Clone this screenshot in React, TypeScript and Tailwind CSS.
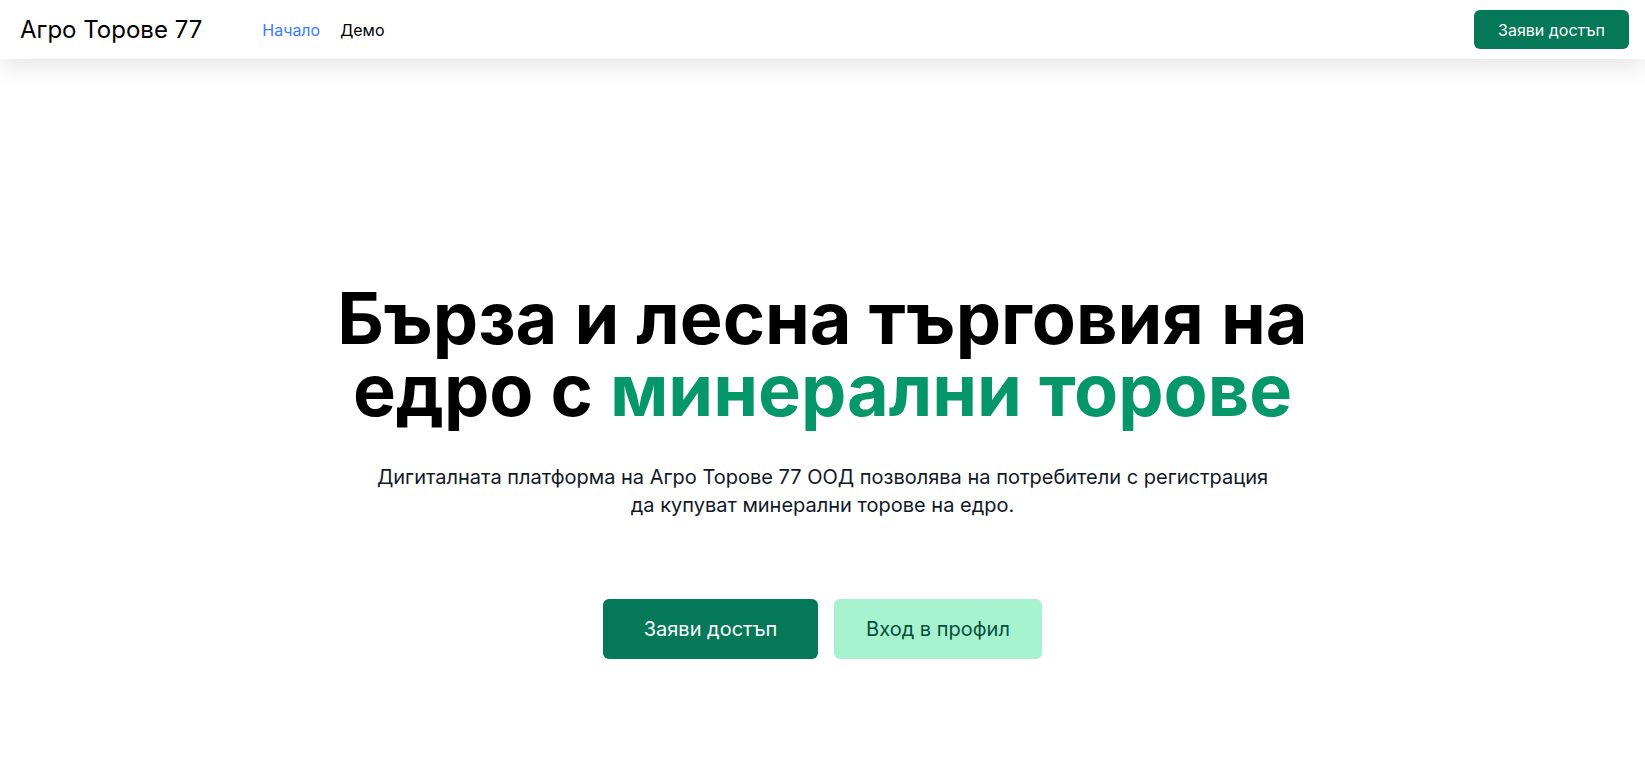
import React from "react";

export default function App() {
  return (
    <div className="min-h-screen bg-white" style={{ fontFamily: "Inter, 'Noto Sans', sans-serif" }}>
      <header className="relative z-10 flex h-[59px] items-center justify-between bg-white pl-5 pr-4 shadow-[0_8px_24px_rgba(0,0,0,0.1)]">
        <div className="flex items-center">
          <span className="text-[24px] text-black">Агро Торове 77</span>
          <nav className="ml-[60px] flex items-center gap-5 text-[16px]">
            <a className="text-[#3b7bff]">Начало</a>
            <a className="text-black">Демо</a>
          </nav>
        </div>
        <button className="h-[39px] rounded-md bg-[#047857] px-6 text-[16px] text-white">Заяви достъп</button>
      </header>
      <main className="flex flex-col items-center pt-[223px] text-center">
        <h1 className="text-[72px] font-bold leading-[72px] text-black">
          <span className="block">Бърза и лесна търговия на</span>
          <span className="block">
            едро с <span className="text-[#059669]">минерални торове</span>
          </span>
        </h1>
        <p className="mt-[37px] text-[20px] leading-[28px] text-[#111827]">
          <span className="block">Дигиталната платформа на Агро Торове 77 ООД позволява на потребители с регистрация</span>
          <span className="block">да купуват минерални торове на едро.</span>
        </p>
        <div className="mt-[80px] flex gap-4">
          <button className="h-[60px] w-[215px] rounded-md bg-[#047857] text-[20px] text-white">Заяви достъп</button>
          <button className="h-[60px] w-[208px] rounded-md bg-[#a7f3d0] text-[20px] text-[#064e3b]">Вход в профил</button>
        </div>
      </main>
    </div>
  );
}
